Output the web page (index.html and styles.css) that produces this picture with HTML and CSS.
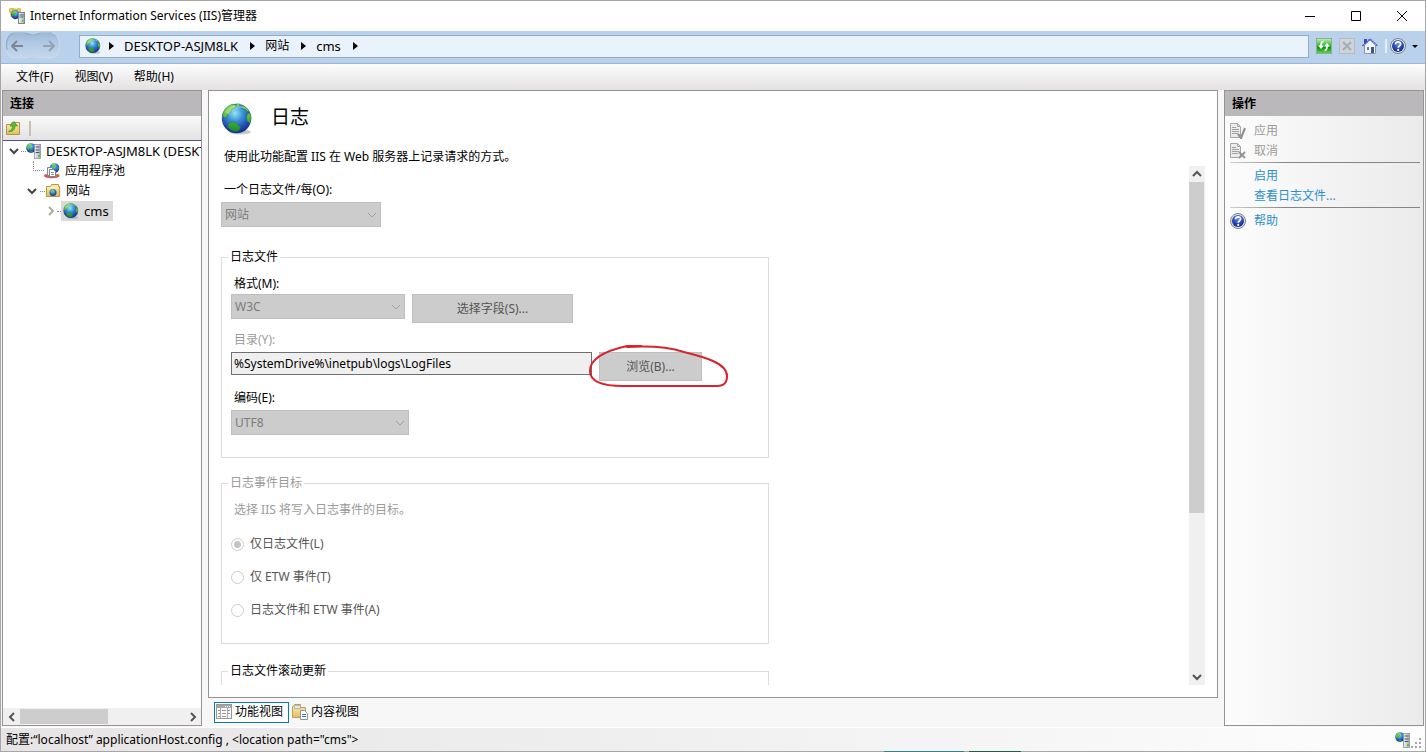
FILE: index.html
```html
<!DOCTYPE html>
<html lang="zh-CN">
<head>
<meta charset="utf-8">
<title>Internet Information Services (IIS)管理器</title>
<link rel="stylesheet" href="styles.css">
</head>
<body>
<svg class="defs" aria-hidden="true">
  <defs>
    <radialGradient id="sea" cx="45%" cy="32%" r="70%">
      <stop offset="0" stop-color="#9be4fb"/><stop offset=".35" stop-color="#3f9ad8"/><stop offset=".7" stop-color="#2350b8"/><stop offset="1" stop-color="#152a80"/>
    </radialGradient>
    <linearGradient id="land" x1="0" y1="0" x2="0" y2="1"><stop offset="0" stop-color="#8fe05a"/><stop offset="1" stop-color="#1c8a2c"/></linearGradient>
    <linearGradient id="folderfill" x1="0" y1="0" x2="0" y2="1"><stop offset="0" stop-color="#fdf0ad"/><stop offset="1" stop-color="#e3bd61"/></linearGradient>
    <linearGradient id="tower" x1="0" y1="0" x2="1" y2="0"><stop offset="0" stop-color="#f4f6f9"/><stop offset="1" stop-color="#a3abb4"/></linearGradient>
    <linearGradient id="green" x1="0" y1="0" x2="0" y2="1"><stop offset="0" stop-color="#c5efb9"/><stop offset=".45" stop-color="#3cb934"/><stop offset=".6" stop-color="#118c18"/><stop offset="1" stop-color="#58e04a"/></linearGradient>
    <radialGradient id="helpfill" cx="50%" cy="30%" r="70%"><stop offset="0" stop-color="#6f92e6"/><stop offset=".6" stop-color="#2647b4"/><stop offset="1" stop-color="#14297e"/></radialGradient>
    <linearGradient id="navfill" x1="0" y1="0" x2="0" y2="1"><stop offset="0" stop-color="#9db9d8"/><stop offset=".4" stop-color="#b0c9e4"/><stop offset="1" stop-color="#c5d8ee"/></linearGradient>
  </defs>
  <symbol id="globe" viewBox="0 0 32 32">
    <ellipse cx="19" cy="29" rx="11" ry="2.5" fill="#777" opacity=".4"/>
    <circle cx="15.5" cy="15.5" r="14.7" fill="url(#sea)"/>
    <path d="M1.500 12C3 6 7 2.500 12 1.200l3 .8-1 3-3 1-1 3-3 2-1 3-3 1zM15 1h4l-1 3-2-1zM21 2.500c3 1 6 3.500 7.500 6.500l-2-.5-2-2-3-1zM27 10l2.500 1c1 4 .5 7-1 9.500l-2.500-3-.5-4zM7 21l4-2.500 4 1.500 4.500 4-1.500 3.500-4 1-4-1.500-3-3z" fill="url(#land)" stroke="#1d7d36" stroke-width=".5"/>
    <path d="M4 9c4-6 13-9 20-4-6 0-13 1-16 7z" fill="#fff" opacity=".28"/>
  </symbol>
  <symbol id="server" viewBox="0 0 16 16">
    <circle cx="5" cy="5" r="4.800" fill="url(#sea)"/>
    <path d="M.5 4 3 .800l2.500.2L5 4 3 6.500 1 6zM4 7.500l3 .5-1 1.500H4z" fill="url(#land)"/>
    <rect x="8.500" y="1.500" width="6" height="14" fill="url(#tower)" stroke="#8a929a" stroke-width=".8"/>
    <path d="M9.500 4h4M9.500 7h4M9.500 9.500h4" stroke="#4e5963"/><rect x="12" y="12" width="2" height="2" fill="#59c930"/>
  </symbol>
  <symbol id="appserver" viewBox="0 0 16 16">
    <path d="M0 2 4 0l5 1 3 2-2 6-4 3-4-3z" fill="#e4c342"/><circle cx="6.500" cy="6.500" r="4.500" fill="url(#sea)"/>
    <path d="M2.500 5 6 2.500l1 3-3 3z" fill="url(#land)"/><path d="M0 1l3-1 1 3-3 1zM9 0l3 1-1 3-3-1z" fill="#e9d36a" stroke="#b89320" stroke-width=".5"/>
    <rect x="9.500" y="4.500" width="6" height="11" fill="url(#tower)" stroke="#7d858d"/><path d="M10.500 7h4M10.500 9h4" stroke="#56616a"/><rect x="13" y="12" width="1.500" height="2" fill="#59c930"/>
  </symbol>
  <symbol id="pools" viewBox="0 0 16 16">
    <circle cx="10.500" cy="5" r="4.800" fill="url(#sea)"/><path d="M7 1l4-.500 1 3-3 1zM13 5l2-1-1 4z" fill="url(#land)"/>
    <path d="M0 13c0-2 2-2 3-1.500h9c2-.500 4 0 3.500 1.500-1 3-14.500 3-15.500 0z" fill="#d9544c"/>
    <path d="M3.500 4.500h5v8h-5z" fill="#eef2f6" stroke="#7e8893"/><path d="M5.500 6.500h4l2 2v5h-6z" fill="#fff" stroke="#7e8893"/><path d="M7 9.500h3M7 11.500h3" stroke="#8a96a3"/>
  </symbol>
  <symbol id="sites" viewBox="0 0 16 16">
    <path d="M1.500 13.500v-10h4l1-2h7v2h1v10z" fill="url(#folderfill)" stroke="#b99443"/><path d="M2 5h12" stroke="#fff6cf"/>
    <circle cx="8" cy="9.500" r="3.500" fill="url(#sea)"/><path d="M5.500 8l3-1 0 2-2 1.500zM8 11l2-1-.5 2z" fill="url(#land)"/>
  </symbol>
  <symbol id="help" viewBox="0 0 16 16">
    <circle cx="8" cy="8" r="7.500" fill="#dfe3ea" stroke="#7b8290"/><circle cx="8" cy="8" r="6" fill="url(#helpfill)"/>
    <path d="M5.500 6.200C5.500 3 10.700 3.200 10.600 6c0 1.800-2.400 1.900-2.400 3.700" fill="none" stroke="#fff" stroke-width="1.700"/><circle cx="8.200" cy="11.900" r="1.100" fill="#fff"/>
  </symbol>
  <symbol id="sheet" viewBox="0 0 16 16">
    <path d="M.5.500h7l3 3v11H.5z" fill="#ececec" stroke="#a6a6a6"/><path d="M7.500.500v3h3" fill="none" stroke="#a6a6a6"/><path d="M2 4.500h4M2 6.500h7M2 8.500h7M2 10.500h6" stroke="#a0a0a0"/>
  </symbol>
  <symbol id="down" viewBox="0 0 10 10"><path d="M1 3l4 4 4-4" fill="none" stroke="currentColor"/></symbol>
  <symbol id="down-bold" viewBox="0 0 10 10"><path d="M1 3l4 4 4-4" fill="none" stroke="currentColor" stroke-width="2"/></symbol>
  <symbol id="right" viewBox="0 0 10 10"><path d="M3 1l4 4-4 4" fill="none" stroke="currentColor" stroke-width="2"/></symbol>
  <symbol id="left" viewBox="0 0 10 10"><path d="M7 1L3 5l4 4" fill="none" stroke="currentColor" stroke-width="2"/></symbol>
  <symbol id="up" viewBox="0 0 10 10"><path d="M1 7l4-4 4 4" fill="none" stroke="currentColor" stroke-width="2"/></symbol>
</svg>

<div class="window">
  <header class="titlebar">
    <svg class="icon16"><use href="#appserver"/></svg>
    <h1 class="window-title">Internet Information Services (IIS)管理器</h1>
    <button class="caption" aria-label="最小化"><svg viewBox="0 0 12 12"><path d="M1 6.500h10"/></svg></button>
    <button class="caption" aria-label="最大化"><svg viewBox="0 0 12 12"><path d="M1.500 1.500h9v9h-9z"/></svg></button>
    <button class="caption" aria-label="关闭"><svg viewBox="0 0 12 12"><path d="M1 1l10 10M11 1L1 11"/></svg></button>
  </header>

  <nav class="navbar">
    <div class="history">
      <svg class="history-shape" viewBox="0 0 56 28"><path d="M9 1h10c4 0 5 2 9 2s5-2 9-2h10c10 0 10 25 0 25H37c-4 0-5-2-9-2s-5 2-9 2H9C-2 26-2 1 9 1z" fill="url(#navfill)" stroke="#cbdcef"/><path d="M2 18C0 8 4 1 10 1h9c4 0 5 2 9 2s5-2 9-2h10" fill="none" stroke="#8ea9c8" stroke-width="1.200"/></svg>
      <button class="arrow back" aria-label="后退"><svg viewBox="0 0 12 12"><path d="M12 6H1M6 1L1 6l5 5"/></svg></button>
      <button class="arrow" aria-label="前进"><svg viewBox="0 0 12 12"><path d="M0 6h11M6 1l5 5-5 5"/></svg></button>
    </div>
    <div class="address">
      <svg class="icon16"><use href="#globe"/></svg>
      <i class="crumb"></i><span class="name">DESKTOP-ASJM8LK</span>
      <i class="crumb"></i><span>网站</span>
      <i class="crumb"></i><span class="name">cms</span>
      <i class="crumb"></i>
    </div>
    <div class="tools">
      <button aria-label="刷新"><svg class="icon16" viewBox="0 0 16 16"><rect x=".5" y=".5" width="15" height="15" fill="url(#green)" stroke="#8fb090"/><path d="M7.500 3.500C5.500 3.500 5 5 5 8" fill="none" stroke="#fff" stroke-width="1.700"/><path d="M2 7.500h6L5 11zM8 8.500h6L11 5z" fill="#fff"/><path d="M8.500 12.500C10.500 12.500 11 11 11 8" fill="none" stroke="#fff" stroke-width="1.700"/></svg></button>
      <button aria-label="停止"><svg class="icon16" viewBox="0 0 16 16"><rect x=".5" y=".5" width="15" height="15" fill="#cfd4da" stroke="#b5bcc5"/><path d="M4 4l8 8M12 4l-8 8" stroke="#a3abb5" stroke-width="2"/></svg></button>
      <button aria-label="主页"><svg class="icon16" viewBox="0 0 16 16"><path d="M2.500 7v8.500h11V7L8 2z" fill="#f2f4f9" stroke="#8a94ad"/><path d="M.5 8L8 1l7.500 7" fill="none" stroke="#5566c8" stroke-width="1.600" stroke-dasharray="2 .6"/><path d="M2 1h3v3L2 6z" fill="#384db8"/><path d="M9 9h3v6H9z" fill="#32579e"/><path d="M5 9h2v3H5z" fill="#69789a"/></svg></button>
      <span class="divider"></span>
      <button class="help" aria-label="帮助"><svg class="icon16"><use href="#help"/></svg><i class="drop"></i></button>
    </div>
  </nav>

  <div class="menubar"><button>文件(F)</button><button>视图(V)</button><button>帮助(H)</button></div>

  <div class="panes">
    <aside class="pane">
      <h2 class="pane-title">连接</h2>
      <div class="pane-tools"><button aria-label="创建新连接"><svg class="icon16" viewBox="0 0 16 16"><path d="M1.500 14.500v-10H6l1-2h7.500v12z" fill="url(#folderfill)" stroke="#b5934a"/><path d="M3.500 11.500c3-1 4-3 4-5.500H5L9 1.500 12.500 6H10c0 4-3 6-6.500 5.500z" fill="#55bf36" stroke="#2f8a22" stroke-width=".6"/></svg></button><span class="tool-line"></span></div>
      <ul class="tree">
        <li class="root"><svg class="expander"><use href="#down-bold"/></svg><i class="dots"></i><svg class="icon16"><use href="#server"/></svg><span class="name clip">DESKTOP-ASJM8LK (DESKT</span></li>
        <li class="level-pool"><i class="branch"></i><svg class="icon16"><use href="#pools"/></svg><span>应用程序池</span></li>
        <li class="level-1"><svg class="expander"><use href="#down-bold"/></svg><i class="dots"></i><svg class="icon16"><use href="#sites"/></svg><span>网站</span></li>
        <li class="level-2"><svg class="expander closed"><use href="#right"/></svg><i class="dots"></i><b class="selected"><svg class="icon16"><use href="#globe"/></svg><span class="name">cms</span></b></li>
      </ul>
      <div class="hscroll"><button aria-label="向左滚动"><svg><use href="#left"/></svg></button><div class="hthumb"></div><button class="end" aria-label="向右滚动"><svg><use href="#right"/></svg></button></div>
    </aside>

    <main class="center">
      <section class="feature">
        <div class="feature-head"><svg class="icon32"><use href="#globe"/></svg><h2>日志</h2></div>
        <p class="intro">使用此功能配置 IIS 在 Web 服务器上记录请求的方式。</p>
        <div class="viewport">
          <form class="form">
            <div class="per-site">
              <label for="per">一个日志文件/每(O):</label>
              <span class="combo combo-per"><select id="per" disabled><option>网站</option></select><svg><use href="#down"/></svg></span>
            </div>
            <fieldset class="log-file">
              <legend>日志文件</legend>
              <label for="format">格式(M):</label>
              <div class="row">
                <span class="combo combo-format"><select id="format" disabled><option>W3C</option></select><svg><use href="#down"/></svg></span>
                <button type="button" class="push push-fields" disabled>选择字段(S)...</button>
              </div>
              <label for="dir" class="muted">目录(Y):</label>
              <div class="row">
                <input id="dir" class="path" type="text" readonly value="%SystemDrive%\inetpub\logs\LogFiles">
                <span class="marked"><button type="button" class="push push-browse" disabled>浏览(B)...</button>
                <svg class="scribble" viewBox="0 0 144 48"><path d="M39 4l14-1-14 0c-18 4-37 11-37 25 0 12 15 15 33 15h94c8 0 10-4 10-10 0-13-23-19-43-24C80 4 58 3 40 4" /></svg></span>
              </div>
              <label for="enc">编码(E):</label>
              <span class="combo combo-enc"><select id="enc" disabled><option>UTF8</option></select><svg><use href="#down"/></svg></span>
            </fieldset>
            <fieldset class="target">
              <legend class="muted">日志事件目标</legend>
              <p class="muted">选择 IIS 将写入日志事件的目标。</p>
              <label class="choice"><input type="radio" name="target" checked disabled>仅日志文件(L)</label>
              <label class="choice"><input type="radio" name="target" disabled>仅 ETW 事件(T)</label>
              <label class="choice"><input type="radio" name="target" disabled>日志文件和 ETW 事件(A)</label>
            </fieldset>
            <fieldset class="rollover"><legend>日志文件滚动更新</legend></fieldset>
          </form>
          <div class="vscroll"><button aria-label="向上滚动"><svg><use href="#up"/></svg></button><div class="vtrack"><div class="vthumb"></div></div><button aria-label="向下滚动"><svg><use href="#down-bold"/></svg></button></div>
        </div>
      </section>
      <div class="tabs">
        <button class="tab active"><svg class="icon16" viewBox="0 0 16 16"><rect x=".5" y=".5" width="15" height="14" fill="#f7f7f7" stroke="#999"/><path d="M1 2.500h14" stroke="#a5a5a5" stroke-width="3"/><path d="M9 2.500h5" stroke="#fff" stroke-dasharray="1 1"/><path d="M4.500 4v10M11.500 4v10" stroke="#aaa"/><path d="M2 6.500h2M2 9.500h2M2 12.500h2M6 6.500h4M6 9.500h4M6 12.500h4M12 6.500h2M12 9.500h2" stroke="#999"/></svg>功能视图</button>
        <button class="tab"><svg class="icon16" viewBox="0 0 16 16"><path d="M.5 13.500V3l2-2.500h6v3h5v10z" fill="url(#folderfill)" stroke="#b79d68"/><path d="M2.500 1.500h6v3h-6z" fill="#e5e8ed" stroke="#999" stroke-width=".6"/><path d="M8.500 6.500h4l3 3v6h-7z" fill="#fff" stroke="#8795a8"/><path d="M10 10.500h4M10 12.500h4" stroke="#4777b8"/></svg>内容视图</button>
      </div>
    </main>

    <aside class="pane actions">
      <h2 class="pane-title">操作</h2>
      <ul class="action-list">
        <li class="off"><svg class="icon16" viewBox="0 0 16 16"><use href="#sheet"/><path d="M8 11l3 4 4-10" fill="none" stroke="#929292" stroke-width="2.200"/></svg><span>应用</span></li>
        <li class="off"><svg class="icon16" viewBox="0 0 16 16"><use href="#sheet"/><path d="M9 9l6 6M15 9l-6 6" stroke="#929292" stroke-width="1.800"/></svg><span>取消</span></li>
        <li class="rule"></li>
        <li><i class="icon16"></i><a href="#">启用</a></li>
        <li><i class="icon16"></i><a href="#">查看日志文件...</a></li>
        <li class="rule"></li>
        <li><svg class="icon16"><use href="#help"/></svg><a href="#">帮助</a></li>
      </ul>
    </aside>
  </div>

  <footer class="status">
    <span>配置:“localhost” applicationHost.config , &lt;location path="cms"&gt;</span>
    <svg class="icon16"><use href="#server"/></svg>
    <svg class="grip" viewBox="0 0 12 12"><path d="M8 1h2v2H8zM4 5h2v2H4zM8 5h2v2H8zM0 9h2v2H0zM4 9h2v2H4zM8 9h2v2H8z" fill="#a5a5a5"/></svg>
  </footer>
  <div class="edge"><i class="edge-teal"></i><i class="edge-green"></i></div>
</div>
</body>
</html>
```
FILE: styles.css
```css
* { box-sizing: border-box; }
body {
  margin: 0;
  color: #000;
  font: 12px/18px "Noto Sans", "Noto Sans CJK SC", sans-serif;
  overflow: hidden;
}
button, input, select { font: inherit; color: inherit; }
button { margin: 0; padding: 0; border: 0; background: none; }
h1, h2, p, ul { margin: 0; padding: 0; font-size: inherit; font-weight: normal; }
ul { list-style: none; }
svg { display: block; flex: none; }
.defs { position: absolute; width: 0; height: 0; }
.icon16 { width: 16px; height: 16px; flex: none; }
.icon32 { width: 32px; height: 32px; }
.name { font-size: 13px; }

.window {
  position: relative;
  display: flex;
  flex-direction: column;
  height: 100vh;
  border: 1px solid #a6a6a6;
  background: #f7f7f7;
}

.titlebar { display: flex; align-items: center; height: 30px; padding-left: 8px; background: #fff; }
.window-title { flex: 1; margin-left: 5px; white-space: nowrap; }
.caption { display: flex; align-items: center; justify-content: center; width: 46px; height: 30px; }
.caption svg { width: 12px; height: 12px; fill: none; stroke: #000; }

.navbar { display: flex; align-items: center; height: 33px; padding: 0 0 2px 4px; background: #b9d1ea; border-bottom: 1px solid #9bb8d6; }
.history { position: relative; display: flex; align-items: center; gap: 20px; width: 56px; height: 28px; padding-left: 6px; }
.history-shape { position: absolute; inset: 0; width: 56px; height: 28px; }
.arrow { position: relative; width: 12px; height: 12px; }
.arrow svg { width: 12px; height: 12px; fill: none; stroke: #98a2ae; stroke-width: 2; }
.back svg { stroke: #7c8793; }
.address { display: flex; flex: 1; align-items: center; height: 23px; margin-left: 18px; padding-left: 5px; background: #eaf2fb; border: 1px solid #91aecd; }
.crumb { width: 0; height: 0; margin: 0 10px 0 12px; border: 4px solid transparent; border-left: 5px solid #000; border-right: 0; }
.address .icon16 + .crumb { margin-left: 8px; }
.tools { display: flex; align-items: center; gap: 7px; padding: 0 7px; }
.divider { width: 2px; height: 14px; margin-right: -4px; background: #e4edf7; }
.help { display: flex; align-items: center; gap: 6px; }
.drop { border: 3px solid transparent; border-top-color: #000; border-bottom: 0; }

.menubar { display: flex; gap: 21px; height: 26px; padding-left: 15px; background: linear-gradient(#fdfdfd, #e3e1e2); }
.menubar button { height: 26px; }

.panes { display: grid; grid-template-columns: 200px minmax(0, 1fr) 200px; gap: 6px; flex: 1; min-height: 0; padding: 0 1px 1px; }
.pane { display: flex; flex-direction: column; min-width: 0; min-height: 0; border: 1px solid #949494; background: #fff; }
.pane-title { height: 25px; padding-left: 7px; line-height: 25px; font-weight: bold; background: #bab8ba; }
.pane-tools { display: flex; align-items: center; gap: 8px; height: 25px; padding-left: 2px; background: linear-gradient(#f9f9f9, #e4e3e3); border-bottom: 1px solid #55507a; }
.tool-line { width: 2px; height: 15px; background: #c5c2b5; }
.tree { flex: 1; overflow: hidden; }
.tree li { display: flex; align-items: center; height: 20px; padding-left: 6px; white-space: nowrap; }
.tree li > span { margin-left: 5px; }
.tree .clip { overflow: hidden; min-width: 0; margin-left: 4px; }
.expander { width: 10px; height: 10px; color: #444; }
.closed { color: #aaa; }
.dots { flex: none; width: 5px; margin: 0 0 0 3px; border-top: 1px dotted #888; }
.root .dots { margin-left: 2px; }
.tree .level-pool { padding-left: 30px; }
.branch { align-self: flex-start; width: 11px; height: 10px; border-left: 1px dotted #888; border-bottom: 1px dotted #888; }
.tree .level-1 { padding-left: 24px; }
.tree .level-2 { padding-left: 43px; }
.level-2 .dots { width: 4px; margin-left: 1px; }
.selected { display: flex; align-items: center; gap: 5px; height: 20px; padding: 0 4px 0 2px; font-weight: normal; background: #d9d9d9; }
.hscroll { display: flex; align-items: center; height: 17px; background: #f0f0f0; }
.hscroll button { display: flex; align-items: center; justify-content: center; width: 17px; height: 17px; }
.hscroll svg, .vscroll svg { width: 10px; height: 10px; color: #555; }
.hthumb { width: 88px; height: 15px; background: #cdcdcd; }
.hscroll .end { margin-left: auto; }

.center { display: flex; flex-direction: column; min-width: 0; min-height: 0; }
.feature { display: flex; flex: 1; flex-direction: column; min-height: 0; padding: 11px 12px 12px; border: 1px solid #949494; background: #fff; }
.feature-head { display: flex; align-items: center; gap: 18px; height: 34px; }
.feature-head h2 { font-size: 19px; line-height: 26px; padding-bottom: 4px; }
.intro { height: 18px; margin: 12px 0 0 3px; }
.viewport { display: flex; flex: 1; min-height: 0; overflow: hidden; }
.form { flex: 1; overflow: hidden; padding-top: 15px; }
.form label { display: block; padding-left: 3px; }
.form .muted { color: #9b9b9b; }
.per-site { margin-bottom: 21px; }
.per-site label { margin-bottom: 3px; }
.combo { position: relative; display: block; height: 25px; }
.combo select { width: 100%; height: 100%; margin: 0; padding: 0 3px; appearance: none; border: 1px solid #bfbfbf; border-radius: 0; background: #ccc; color: #7c7c7c; opacity: 1; }
.combo svg { position: absolute; top: 8px; right: 4px; width: 10px; height: 10px; color: #a0a0a0; }
.combo-per { width: 160px; }
.combo-format { width: 174px; }
.combo-enc { width: 178px; }
fieldset { width: 548px; margin: 0 0 16px; padding: 0 9px; border: 1px solid #dcdcdc; }
legend { padding: 0 2px; margin-left: -3px; }
.log-file { height: 210px; padding-top: 8px; }
.log-file > label { margin-bottom: 3px; }
.log-file > label:first-of-type { margin: 1px 0; }
.row { display: flex; align-items: flex-start; gap: 7px; height: 37px; }
.path { width: 361px; height: 23px; padding: 0 2px; border: 1px solid #707070; border-radius: 0; background: #efefef; }
.push { height: 29px; border: 1px solid #bfbfbf; background: #ccc; color: #555; }
.push-fields { width: 161px; }
.push-browse { width: 103px; }
.marked { position: relative; display: block; }
.scribble { position: absolute; top: -9px; left: -11px; width: 144px; height: 48px; fill: none; stroke: #d8232e; stroke-width: 2; stroke-linecap: round; stroke-linejoin: round; pointer-events: none; }
.target { height: 170px; padding-top: 9px; }
.target p { margin: 0 0 16px 3px; }
.form .choice { display: flex; align-items: center; gap: 6px; height: 18px; margin-bottom: 15px; padding: 0; color: #555; }
.choice input { width: 13px; height: 13px; margin: 0; appearance: none; border: 1px solid #ccc; border-radius: 50%; background: #fff; }
.choice input:checked { background: radial-gradient(circle, #c6c6c6 3px, #fff 4px); }
.rollover { height: 120px; margin-top: 18px; }
.vscroll { display: flex; flex-direction: column; width: 16px; background: #f0f0f0; }
.vscroll button { display: flex; align-items: center; justify-content: center; height: 16px; }
.vtrack { flex: 1; }
.vthumb { width: 15px; height: 68%; background: #cdcdcd; }
.tabs { display: flex; align-items: center; gap: 1px; height: 28px; padding-left: 6px; }
.tab { display: flex; align-items: center; gap: 3px; height: 21px; padding: 0 5px 0 1px; border: 1px solid transparent; }
.active { border-color: #1079a8; background: #fff; }

.actions { background: linear-gradient(90deg, #fcfcfc, #ebebeb); }
.action-list { padding: 5px 3px 0 5px; }
.action-list li { display: flex; align-items: center; gap: 8px; height: 20px; }
.action-list .rule { height: 1px; margin: 1px 0 3px; background: linear-gradient(90deg, #d0d0d0, #858585 30%); }
.action-list a { color: #2b90cc; text-decoration: none; }
.off { color: #9b9b9b; }

.status { display: flex; align-items: center; height: 24px; padding: 0 2px 0 5px; border-top: 1px solid #fff; background: linear-gradient(90deg, #e6e4e5, #fdfdfd); }
.status span { flex: 1; white-space: pre; }
.grip { width: 12px; height: 12px; align-self: flex-end; margin-bottom: 2px; }
.edge { position: absolute; left: 62%; bottom: -1px; display: flex; gap: 5px; }
.edge-teal { width: 80px; height: 1px; background: #2b8591; }
.edge-green { width: 52px; height: 1px; background: #1e5e42; }
```
